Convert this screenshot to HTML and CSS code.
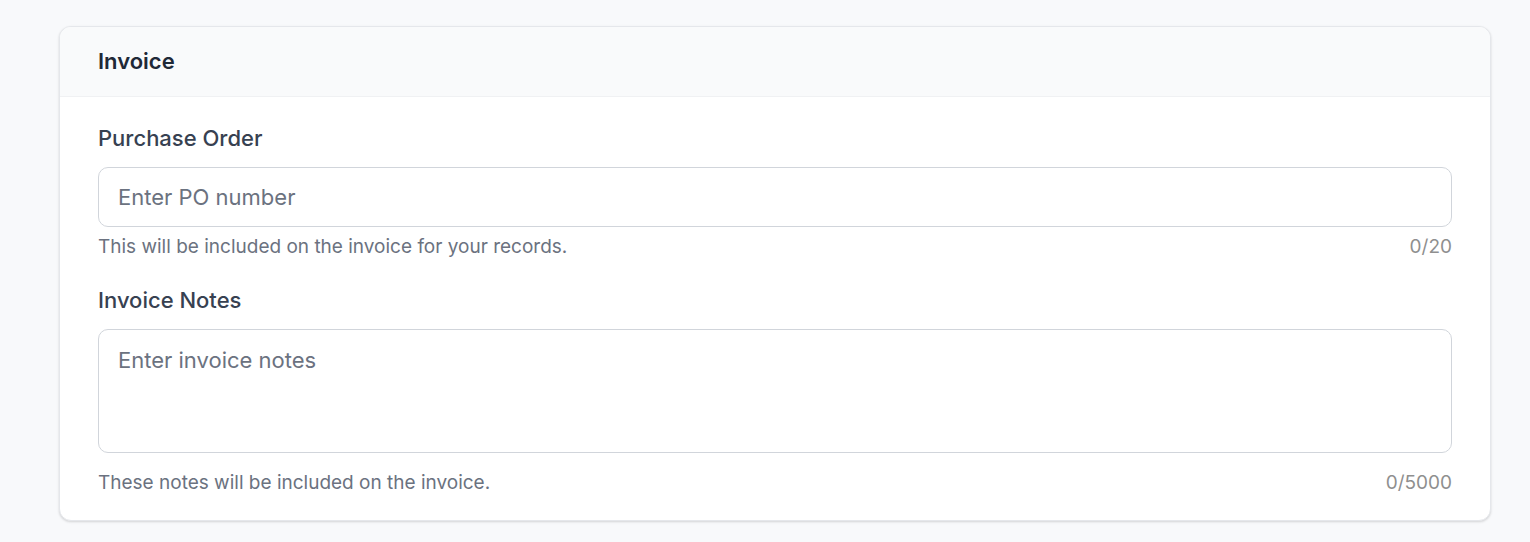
FILE: index.html
```html
<!DOCTYPE html>
<html>
<head>
<meta charset="utf-8">
<link rel="stylesheet" href="styles.css">
</head>
<body>
<div class="page">
  <section class="card">
    <header class="card-header">
      <h2 class="card-title">Invoice</h2>
    </header>
    <div class="card-body">
      <div class="field">
        <label class="label">Purchase Order</label>
        <input class="input" type="text" placeholder="Enter PO number">
        <div class="help-row">
          <span class="help">This will be included on the invoice for your records.</span>
          <span class="count">0/20</span>
        </div>
      </div>
      <div class="field">
        <label class="label">Invoice Notes</label>
        <textarea class="textarea" placeholder="Enter invoice notes"></textarea>
        <div class="help-row help-row-notes">
          <span class="help">These notes will be included on the invoice.</span>
          <span class="count">0/5000</span>
        </div>
      </div>
    </div>
  </section>
</div>
</body>
</html>
```

FILE: styles.css
```css
* { box-sizing: border-box; }
html, body { margin: 0; padding: 0; }
body {
  background: #f8f9fb;
  font-family: Inter, "Noto Sans", "Liberation Sans", sans-serif;
  color: #1f2937;
}
.page {
  padding: 26px 39px 20px 59px;
}
.card {
  background: #fff;
  border: 1px solid #e5e7eb;
  border-radius: 12px;
  box-shadow: 0 1px 3px rgba(0,0,0,0.10), 0 1px 2px rgba(0,0,0,0.06);
  overflow: hidden;
}
.card-header {
  background: #f9fafb;
  height: 70px;
  display: flex;
  align-items: center;
  padding: 0 38px 1px;
  border-bottom: 1px solid #f0f1f3;
}
.card-title {
  margin: 0;
  font-size: 22px;
  font-weight: 600;
  color: #1f2937;
}
.card-body {
  padding: 27px 38px 25px;
  display: flex;
  flex-direction: column;
  gap: 27px;
}
.field {
  display: flex;
  flex-direction: column;
}
.label {
  font-size: 22px;
  font-weight: 500;
  line-height: 28px;
  color: #374151;
  margin-bottom: 15px;
}
.input, .textarea {
  width: 100%;
  border: 1px solid #d1d5db;
  border-radius: 10px;
  font-family: inherit;
  font-size: 22px;
  color: #111827;
  padding: 0 19px;
  background: #fff;
  outline: none;
}
.input { height: 60px; }
.textarea {
  height: 124px;
  padding-top: 16px;
  resize: none;
  display: block;
  line-height: 28px;
}
.input::placeholder, .textarea::placeholder { color: #6b7280; }
.help-row {
  display: flex;
  justify-content: space-between;
  align-items: center;
  margin-top: 8px;
  line-height: 24px;
}
.help-row-notes { margin-top: 18px; }
.help {
  font-size: 19px;
  color: #6b7280;
}
.count {
  font-size: 19px;
  color: #8f8f8f;
}
```
